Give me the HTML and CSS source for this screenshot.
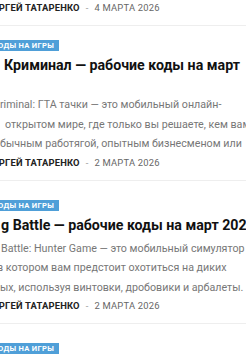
FILE: index.html
```html
<!DOCTYPE html>
<html lang="ru">
<head>
<meta charset="utf-8">
<title>Коды на игры</title>
<link rel="stylesheet" href="styles.css">
</head>
<body>
<div class="feed">
  <div class="post post--tail">
    <div class="meta"><span class="author cut-se">СЕРГЕЙ ТАТАРЕНКО</span><span class="dot">-</span><span class="date">4 МАРТА 2026</span></div>
  </div>

  <article class="post post--first">
    <div class="cat"><span class="badge">КОДЫ НА ИГРЫ</span></div>
    <h2 class="title">
      <span class="line in-4">Криминал — рабочие коды на март</span>
      <span class="line out">2026</span>
    </h2>
    <p class="excerpt">
      <span class="line cut-c">Criminal: ГТА тачки — это мобильный онлайн-</span>
      <span class="line in-5">открытом мире, где только вы решаете, кем вам быть</span>
      <span class="line cut-o">обычным работягой, опытным бизнесменом или</span>
    </p>
    <div class="meta"><span class="author cut-se">СЕРГЕЙ ТАТАРЕНКО</span><span class="dot">-</span><span class="date">2 МАРТА 2026</span></div>
  </article>

  <article class="post">
    <div class="cat"><span class="badge">КОДЫ НА ИГРЫ</span></div>
    <h2 class="title">
      <span class="line in-1">g Battle — рабочие коды на март 2026</span>
    </h2>
    <p class="excerpt">
      <span class="line in-1">Battle: Hunter Game — это мобильный симулятор</span>
      <span class="line cut-v">в котором вам предстоит охотиться на диких</span>
      <span class="line">ых, используя винтовки, дробовики и арбалеты.</span>
    </p>
    <div class="meta"><span class="author cut-se">СЕРГЕЙ ТАТАРЕНКО</span><span class="dot">-</span><span class="date">2 МАРТА 2026</span></div>
  </article>

  <article class="post">
    <div class="cat"><span class="badge">КОДЫ НА ИГРЫ</span></div>
  </article>
</div>
</body>
</html>
```

FILE: styles.css
```css
html, body {
  margin: 0;
  padding: 0;
  background: #ffffff;
}
body {
  width: 246px;
  height: 360px;
  overflow: hidden;
  font-family: Roboto, "Noto Sans", sans-serif;
}
.feed {
  display: flex;
  flex-direction: column;
}
.post {
  padding: 19px 0 12px;
  border-bottom: 1px solid #eeeeee;
}
.post--tail {
  padding-top: 0;
  margin-top: -1px;
}
.post--first {
  padding-top: 14px;
}
.line {
  display: block;
  white-space: nowrap;
}
.meta {
  display: flex;
  align-items: center;
  white-space: nowrap;
  font-size: 9.4px;
  line-height: 11px;
  letter-spacing: 0.2px;
  text-transform: uppercase;
}
.author {
  font-weight: 700;
  color: #222222;
}
.dot {
  color: #999999;
  margin: 0 6px;
}
.date {
  color: #666666;
}
.cut-se { margin-left: -13px; }
.cat {
  display: flex;
  margin-left: -12px;
}
.badge {
  background: #4f9fd8;
  color: #ffffff;
  font-weight: 700;
  font-size: 7.6px;
  line-height: 11px;
  padding: 0 5px;
  letter-spacing: 0.3px;
}
.title {
  margin: 6px 0 0;
  font-size: 14.2px;
  line-height: 16px;
  font-weight: 700;
  color: #111111;
}
.excerpt {
  margin: 6px 0 0;
  font-size: 10.7px;
  line-height: 19.5px;
  color: #777777;
}
.post .meta:last-child { margin-top: 3px; }
.in-4 { text-indent: 4px; }
.in-5 { text-indent: 5px; }
.in-1 { text-indent: 1px; }
.out { text-indent: -60px; }
.cut-c { text-indent: -7px; }
.cut-o { text-indent: -6px; }
.cut-v { text-indent: -3px; }
```
